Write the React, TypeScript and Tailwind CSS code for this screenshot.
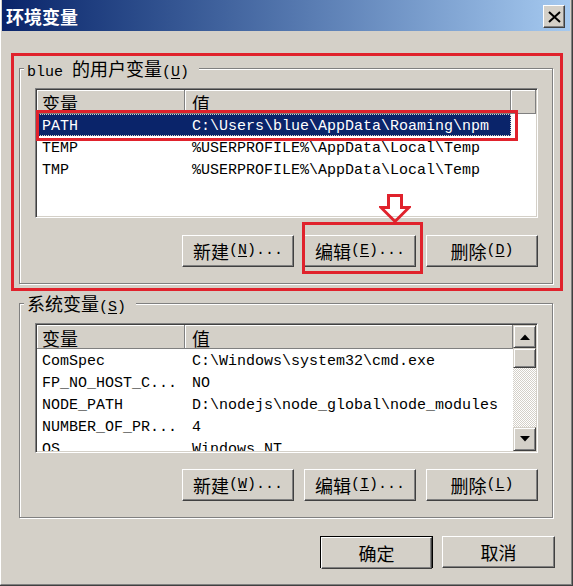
import React from "react";

const CJK = /([\u3000-\u9fff\uff00-\uffef]+)/;
function M({ t }: { t: string }) {
  return (
    <>
      {t.split(CJK).map((p, i) =>
        i % 2 === 1 ? (
          <span key={i} className="text-[18px] font-['Noto_Sans_CJK_SC',sans-serif]">
            {p}
          </span>
        ) : (
          <React.Fragment key={i}>{p}</React.Fragment>
        )
      )}
    </>
  );
}

function Btn({ children, w }: { children: React.ReactNode; w: string }) {
  return (
    <div
      className={`${w} h-[32px] flex items-center justify-center bg-[#d4d0c8] border border-t-white border-l-white border-r-[#404040] border-b-[#404040] shadow-[inset_-1px_-1px_#808080] text-black leading-[18px]`}
    >
      {children}
    </div>
  );
}

function HeaderCell({ w, pl, children }: { w: string; pl: string; children?: React.ReactNode }) {
  return (
    <div
      className={`${w} ${pl} h-full flex items-center pt-[2px] border-r border-b border-r-[#808080] border-b-[#808080] shadow-[inset_1px_1px_#ffffff] overflow-hidden whitespace-nowrap`}
    >
      {children}
    </div>
  );
}

type Row = [string, string];

function Rows({ rows, selected }: { rows: Row[]; selected?: number }) {
  return (
    <>
      {rows.map((r, i) => (
        <div key={i} className="flex h-[22px] shrink-0 items-center whitespace-nowrap">
          <div
            className={`flex h-full items-center pt-[3px] ${
              i === selected
                ? "bg-[#0a246a] text-white outline-1 outline-dotted outline-[#d4d0c8] -outline-offset-1"
                : "text-black"
            }`}
          >
            <div className="w-[148px] pl-[5px] overflow-hidden">{r[0]}</div>
            <div className="w-[326px] pl-[7px] overflow-hidden">{r[1]}</div>
          </div>
        </div>
      ))}
    </>
  );
}

function Sunken({ children }: { children: React.ReactNode }) {
  return (
    <div className="w-[503px] h-[130px] border border-t-[#808080] border-l-[#808080] border-r-white border-b-white shadow-[inset_1px_1px_#404040,inset_-1px_-1px_#d4d0c8] p-[1px] flex">
      <div className="flex-1 bg-white flex overflow-hidden">{children}</div>
    </div>
  );
}

function ScrollBtn({ down, h }: { down?: boolean; h: string }) {
  return (
    <div
      className={`w-full ${h} shrink-0 flex items-center justify-center bg-[#d4d0c8] border border-t-[#d4d0c8] border-l-[#d4d0c8] border-r-[#404040] border-b-[#404040] shadow-[inset_1px_1px_#ffffff,inset_-1px_-1px_#808080]`}
    >
      {h !== "h-[20px]" && (
        <svg width="10" height="6" viewBox="0 0 10 6">
          {down ? <polygon points="0,0 10,0 5,5.5" fill="#000" /> : <polygon points="0,6 10,6 5,0.5" fill="#000" />}
        </svg>
      )}
    </div>
  );
}

function GroupLabel({ children }: { children: React.ReactNode }) {
  return (
    <div className="-mt-[10px] ml-[4px] self-start bg-[#d4d0c8] pl-[3px] pr-[10px] leading-[18px] h-[18px] text-black whitespace-nowrap">
      {children}
    </div>
  );
}

export default function App() {
  const userRows: Row[] = [
    ["PATH", "C:\\Users\\blue\\AppData\\Roaming\\npm"],
    ["TEMP", "%USERPROFILE%\\AppData\\Local\\Temp"],
    ["TMP", "%USERPROFILE%\\AppData\\Local\\Temp"],
  ];
  const sysRows: Row[] = [
    ["ComSpec", "C:\\Windows\\system32\\cmd.exe"],
    ["FP_NO_HOST_C...", "NO"],
    ["NODE_PATH", "D:\\nodejs\\node_global\\node_modules"],
    ["NUMBER_OF_PR...", "4"],
    ["OS", "Windows_NT"],
  ];

  return (
    <div className="relative w-[573px] h-[586px] overflow-hidden font-['Liberation_Mono','Noto_Sans_CJK_SC',monospace] text-[15px] leading-[18px]">
      <div className="w-full h-full bg-[#d4d0c8] border-r border-b border-r-[#404040] border-b-[#404040]">
        <div className="w-full h-full flex flex-col border-l border-r border-b border-l-white border-r-[#808080] border-b-[#808080] px-[1px]">
          {/* Title bar */}
          <div className="h-[31px] flex bg-linear-to-r from-[#0a246a] to-[#a6caf0] shrink-0">
            <div className="pl-[4px] flex items-center text-white font-bold text-[18px] font-['Noto_Sans_CJK_SC',sans-serif]">
              环境变量
            </div>
            <div className="ml-auto mr-[5px] mt-[5px] w-[22px] h-[23px] flex items-center justify-center bg-[#d4d0c8] border border-t-white border-l-white border-r-[#404040] border-b-[#404040] shadow-[inset_-1px_-1px_#808080]">
              <svg width="13" height="12" viewBox="0 0 13 12">
                <path d="M1 1 L12 11 M12 1 L1 11" stroke="#000" strokeWidth="2" />
              </svg>
            </div>
          </div>

          {/* User variables group */}
          <div className="mt-[37px] ml-[17px] w-[534px] h-[216px] shrink-0 border border-[#808080] shadow-[inset_1px_1px_#ffffff,1px_1px_#ffffff] flex flex-col">
            <GroupLabel>
              <M t="blue 的用户变量(" />
              <span className="underline underline-offset-[2px]">U</span>)
            </GroupLabel>
            <div className="mt-[11px] ml-[15px]">
              <Sunken>
                <div className="flex-1 flex flex-col">
                  <div className="flex h-[24px] bg-[#d4d0c8] shrink-0">
                    <HeaderCell w="w-[148px]" pl="pl-[5px]">
                      <M t="变量" />
                    </HeaderCell>
                    <HeaderCell w="w-[326px]" pl="pl-[7px]">
                      <M t="值" />
                    </HeaderCell>
                    <HeaderCell w="flex-1" pl="pl-0" />
                  </div>
                  <Rows rows={userRows} selected={0} />
                </div>
              </Sunken>
            </div>
            <div className="mt-[17px] ml-[15px] w-[503px] flex justify-end gap-[10px]">
              <Btn w="w-[112px]">
                <M t="新建(" />
                <span className="underline underline-offset-[2px]">N</span>)...
              </Btn>
              <Btn w="w-[112px]">
                <M t="编辑(" />
                <span className="underline underline-offset-[2px]">E</span>)...
              </Btn>
              <Btn w="w-[112px]">
                <M t="删除(" />
                <span className="underline underline-offset-[2px]">D</span>)
              </Btn>
            </div>
          </div>

          {/* System variables group */}
          <div className="mt-[19px] ml-[17px] w-[534px] h-[215px] shrink-0 border border-[#808080] shadow-[inset_1px_1px_#ffffff,1px_1px_#ffffff] flex flex-col">
            <GroupLabel>
              <M t="系统变量(" />
              <span className="underline underline-offset-[2px]">S</span>)
            </GroupLabel>
            <div className="mt-[11px] ml-[15px]">
              <Sunken>
                <div className="flex-1 flex flex-col overflow-hidden">
                  <div className="flex h-[24px] bg-[#d4d0c8] shrink-0">
                    <HeaderCell w="w-[148px]" pl="pl-[5px]">
                      <M t="变量" />
                    </HeaderCell>
                    <HeaderCell w="flex-1" pl="pl-[7px]">
                      <M t="值" />
                    </HeaderCell>
                  </div>
                  <Rows rows={sysRows} />
                </div>
                <div className="w-[23px] flex flex-col shrink-0">
                  <ScrollBtn h="h-[23px]" />
                  <ScrollBtn h="h-[20px]" />
                  <div className="flex-1 bg-[image:repeating-conic-gradient(#d4d0c8_0_25%,#ffffff_0_50%)] bg-[length:2px_2px]" />
                  <ScrollBtn h="h-[24px]" down />
                </div>
              </Sunken>
            </div>
            <div className="mt-[16px] ml-[15px] w-[503px] flex justify-end gap-[10px]">
              <Btn w="w-[112px]">
                <M t="新建(" />
                <span className="underline underline-offset-[2px]">W</span>)...
              </Btn>
              <Btn w="w-[112px]">
                <M t="编辑(" />
                <span className="underline underline-offset-[2px]">I</span>)...
              </Btn>
              <Btn w="w-[112px]">
                <M t="删除(" />
                <span className="underline underline-offset-[2px]">L</span>)
              </Btn>
            </div>
          </div>

          {/* OK / Cancel */}
          <div className="mt-[18px] mr-[15px] flex justify-end gap-[9px]">
            <div className="w-[113px] h-[32px] border border-black flex">
              <Btn w="w-full">
                <M t="确定" />
              </Btn>
            </div>
            <Btn w="w-[113px]">
              <M t="取消" />
            </Btn>
          </div>
        </div>
      </div>

      {/* Red annotation overlays */}
      <div className="absolute left-[11px] top-[53px] w-[552px] h-[238px] border-[3px] border-[#e0222c] pointer-events-none" />
      <div className="absolute left-[36px] top-[110px] w-[482px] h-[31px] border-[3px] border-[#e0222c] pointer-events-none" />
      <div className="absolute left-[302px] top-[222px] w-[121px] h-[52px] border-[3px] border-[#e0222c] pointer-events-none" />
      <svg className="absolute left-[379px] top-[194px]" width="32" height="30" viewBox="0 0 32 30">
        <polygon
          points="9.5,1.5 22.5,1.5 22.5,13.5 30,13.5 16,27.5 2,13.5 9.5,13.5"
          fill="none"
          stroke="#e0222c"
          strokeWidth="3"
        />
      </svg>
    </div>
  );
}
